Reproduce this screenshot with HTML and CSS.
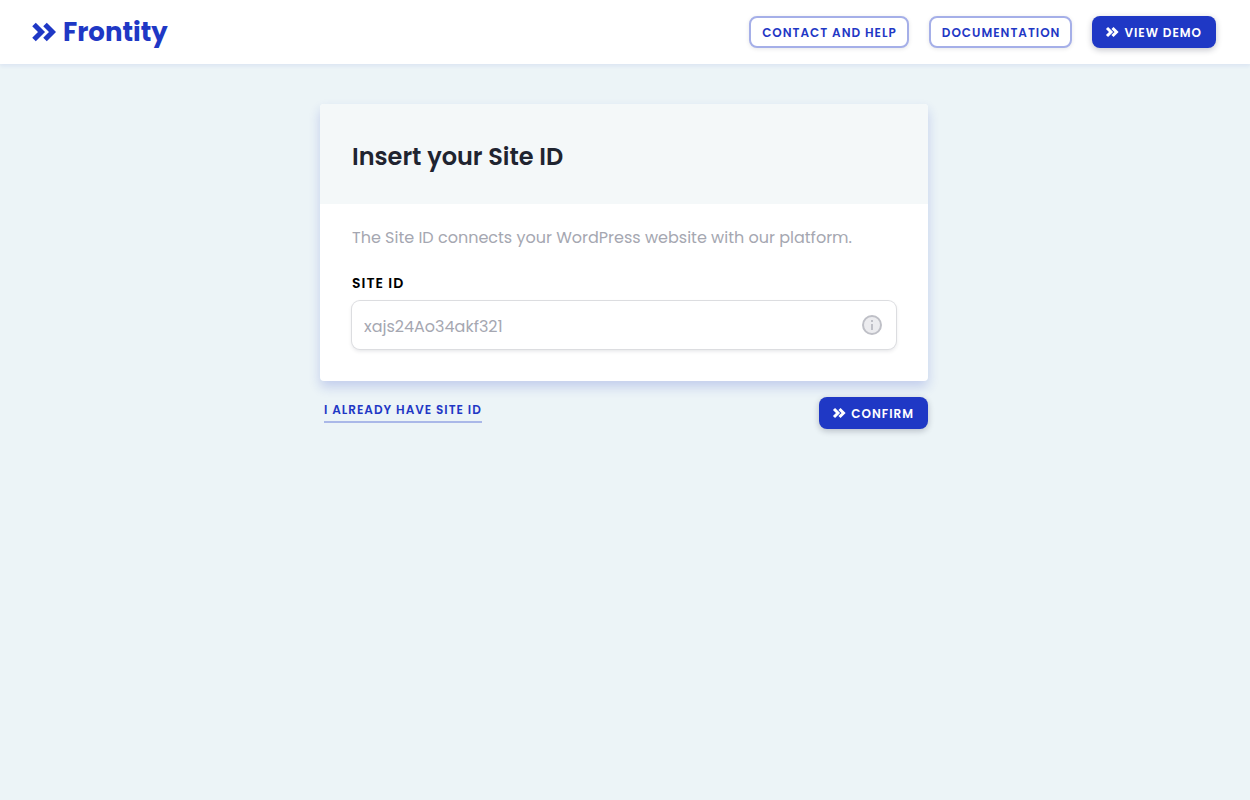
FILE: index.html
```html
<!DOCTYPE html>
<html lang="en">
<head>
<meta charset="utf-8">
<meta name="viewport" content="width=device-width, initial-scale=1">
<title>Frontity</title>
<link rel="stylesheet" href="styles.css">
</head>
<body>
<header class="topbar">
  <a class="brand" href="#">
    <svg class="brand-mark" viewBox="0 0 24 20" aria-hidden="true"><path d="M2 2.500l7.500 7.500L2 17.500M13 2.500l7.500 7.500-7.500 7.500"/></svg>
    <span>Frontity</span>
  </a>
  <nav class="actions">
    <a class="button outline" href="#">Contact and help</a>
    <a class="button outline" href="#">Documentation</a>
    <a class="button solid" href="#">
      <svg class="chevrons" viewBox="0 0 12 10" aria-hidden="true"><path d="M1 1l4 4-4 4M6.500 1l4 4-4 4"/></svg>
      <span class="button-text">View demo</span>
    </a>
  </nav>
</header>
<main class="page">
  <form class="form">
    <section class="card">
      <div class="card-head"><h1 class="title">Insert your Site ID</h1></div>
      <div class="card-body">
        <p class="intro">The Site ID connects your WordPress website with our platform.</p>
        <label class="label" for="site-id">Site ID</label>
        <div class="field">
          <input class="input" id="site-id" type="text" placeholder="xajs24Ao34akf321">
          <svg class="info" viewBox="0 0 20 20" aria-hidden="true"><circle cx="10" cy="10" r="9"/><path d="M9 5h2v2H9zM9 9h2v6H9z"/></svg>
        </div>
      </div>
    </section>
    <div class="form-foot">
      <a class="link" href="#">I already have site ID</a>
      <button class="button solid" type="button">
        <svg class="chevrons" viewBox="0 0 12 10" aria-hidden="true"><path d="M1 1l4 4-4 4M6.500 1l4 4-4 4"/></svg>
        <span class="button-text">Confirm</span>
      </button>
    </div>
  </form>
</main>
</body>
</html>
```
FILE: styles.css
```css
* {
  box-sizing: border-box;
}

body {
  margin: 0;
  min-height: 100vh;
  background: #ecf4f7;
  color: #1f2430;
  font-family: Poppins, Inter, sans-serif;
  font-size: 16px;
}

.topbar {
  display: flex;
  align-items: center;
  justify-content: space-between;
  min-height: 64px;
  padding: 0 34px 0 32px;
  background: #fff;
  box-shadow: 0 2px 4px rgba(31, 56, 197, 0.08);
}

.brand {
  display: flex;
  align-items: center;
  gap: 7px;
  color: #1f38c5;
  font-size: 26px;
  font-weight: 700;
  line-height: 32px;
  text-decoration: none;
}

.brand-mark {
  width: 24px;
  height: 20px;
  fill: none;
  stroke: currentColor;
  stroke-width: 5;
}

.actions {
  display: flex;
  gap: 20px;
}

.button {
  display: inline-flex;
  align-items: center;
  justify-content: center;
  gap: 6px;
  height: 32px;
  border: 0;
  border-radius: 8px;
  font-family: inherit;
  font-size: 12px;
  font-weight: 600;
  line-height: 16px;
  letter-spacing: 1px;
  text-decoration: none;
  text-transform: uppercase;
  white-space: nowrap;
}

.button-text {
  padding-top: 2px;
}

.outline {
  padding: 2px 10px 0 11px;
  border: 2px solid #a5afe8;
  background: #fff;
  color: #1f38c5;
  box-shadow: 0 1px 4px rgba(12, 17, 43, 0.1);
}

.solid {
  padding: 0 14px;
  background: #1f38c5;
  color: #fff;
  box-shadow: 0 2px 6px rgba(12, 17, 43, 0.24);
}

.chevrons {
  width: 12px;
  height: 10px;
  overflow: visible;
  fill: none;
  stroke: currentColor;
  stroke-width: 3;
}

.page {
  display: flex;
  justify-content: center;
  padding: 40px 18px 40px 16px;
}

.form {
  width: 100%;
  max-width: 608px;
}

.card {
  overflow: hidden;
  border-radius: 4px;
  background: #fff;
  box-shadow: 0 6px 12px rgba(31, 56, 197, 0.2);
}

.card-head {
  padding: 37px 32px 31px;
  background: #f4f8f9;
}

.title {
  margin: 0;
  font-size: 24px;
  font-weight: 600;
  line-height: 32px;
}

.card-body {
  padding: 22px 32px 32px;
}

.intro {
  margin: 0 0 24px;
  color: #a5a7b1;
  line-height: 24px;
}

.label {
  display: block;
  margin-bottom: 8px;
  color: #000;
  font-size: 14px;
  font-weight: 600;
  line-height: 19px;
  letter-spacing: 1px;
  text-transform: uppercase;
}

.field {
  display: flex;
  align-items: center;
  height: 48px;
  padding: 0 14px 0 12px;
  border-radius: 8px;
  background: #fff;
  box-shadow: 0 0 0 1px #dcdde0, 0 2px 4px rgba(12, 17, 43, 0.12);
}

.input {
  flex: 1;
  min-width: 0;
  padding: 4px 0 0;
  border: 0;
  outline: 0;
  background: transparent;
  color: #1f2430;
  font: inherit;
  line-height: 24px;
}

.input::placeholder {
  color: #a5a7b1;
  opacity: 1;
}

.info {
  width: 20px;
  height: 20px;
}

.info circle {
  fill: #ececef;
  stroke: #bfc0c7;
  stroke-width: 2;
}

.info path {
  fill: #bfc0c7;
}

.form-foot {
  display: flex;
  align-items: flex-start;
  justify-content: space-between;
  padding: 16px 0 0 4px;
}

.link {
  padding: 5px 0 3px;
  border-bottom: 2px solid #aab8e8;
  color: #1f38c5;
  font-size: 12px;
  font-weight: 600;
  line-height: 16px;
  letter-spacing: 1px;
  text-decoration: none;
  text-transform: uppercase;
}
```
